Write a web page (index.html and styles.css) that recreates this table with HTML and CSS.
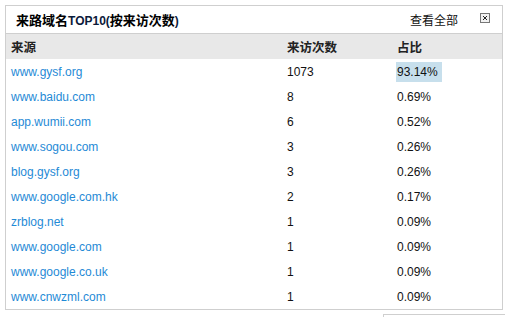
FILE: index.html
```html
<!DOCTYPE html>
<html>
<head>
<meta charset="utf-8">
<link rel="stylesheet" href="styles.css">
</head>
<body>
<div class="panel">
  <div class="panel-head">
    <span class="title">来路域名<span class="latin">TOP10(</span>按来访次数<span class="latin">)</span></span>
    <span class="actions">
      <a class="more">查看全部</a>
      <span class="close"><svg width="10" height="10" viewBox="0 0 10 10"><rect x="0.5" y="0.5" width="9" height="9" fill="#f2f2f2" stroke="#777"/><path d="M3 3 L7 7 M7 3 L3 7" stroke="#222" stroke-width="1"/></svg></span>
    </span>
  </div>
  <table class="grid">
    <thead>
      <tr><th class="c1">来源</th><th class="c2">来访次数</th><th class="c3">占比</th></tr>
    </thead>
    <tbody>
      <tr><td><a>www.gysf.org</a></td><td>1073</td><td><span class="hl">93.14%</span></td></tr>
      <tr><td><a>www.baidu.com</a></td><td>8</td><td>0.69%</td></tr>
      <tr><td><a>app.wumii.com</a></td><td>6</td><td>0.52%</td></tr>
      <tr><td><a>www.sogou.com</a></td><td>3</td><td>0.26%</td></tr>
      <tr><td><a>blog.gysf.org</a></td><td>3</td><td>0.26%</td></tr>
      <tr><td><a>www.google.com.hk</a></td><td>2</td><td>0.17%</td></tr>
      <tr><td><a>zrblog.net</a></td><td>1</td><td>0.09%</td></tr>
      <tr><td><a>www.google.com</a></td><td>1</td><td>0.09%</td></tr>
      <tr><td><a>www.google.co.uk</a></td><td>1</td><td>0.09%</td></tr>
      <tr><td><a>www.cnwzml.com</a></td><td>1</td><td>0.09%</td></tr>
    </tbody>
  </table>
</div>
<div class="next-box"></div>
</body>
</html>
```
FILE: styles.css
```css
html, body { background: #fff; }
body {
  margin: 5px 0 0 5px;
  width: 500px;
  font-family: "Liberation Sans", Arial, "Noto Sans CJK SC", sans-serif;
  font-size: 12px;
  color: #111;
  overflow: hidden;
}
.panel {
  border: 1px solid #cfcfcf;
  width: 498px;
  box-sizing: border-box;
}
.panel-head {
  display: flex;
  align-items: center;
  justify-content: space-between;
  height: 27px;
  border-bottom: 1px solid #cfcfcf;
  padding: 0 12px 0 10px;
}
.title {
  font-family: "Liberation Sans", Arial, "Noto Sans CJK SC", sans-serif;
  font-weight: bold;
  font-size: 13px;
  color: #000;
}
.title .latin {
  font-size: 12px;
  color: #0a1a3a;
}
.actions {
  display: flex;
  align-items: center;
  gap: 22px;
}
.more {
  font-family: "Noto Sans CJK SC", sans-serif;
  font-size: 12px;
  color: #111;
}
.close {
  display: flex;
  margin-top: -3px;
}
.grid {
  width: 100%;
  border-collapse: collapse;
  table-layout: fixed;
}
.grid th {
  background: #e8e8e8;
  height: 25px;
  padding: 0 0 0 5px;
  text-align: left;
  font-family: "Noto Sans CJK SC", sans-serif;
  font-weight: bold;
  font-size: 12.5px;
  color: #222;
}
.grid .c1 { width: 271px; }
.grid .c2 { width: 105px; }
.grid td {
  height: 25px;
  padding: 0 0 0 5px;
  vertical-align: middle;
  line-height: 14px;
}
.grid a {
  color: #1f8ad6;
  text-decoration: none;
}
.hl {
  background: #c7dfec;
  display: inline-block;
  padding: 3px 4px 3px 1px;
  margin-left: -1px;
}
.next-box {
  margin: 4px 0 0 378px;
  width: 130px;
  height: 20px;
  border: 1px solid #cfcfcf;
}
```
